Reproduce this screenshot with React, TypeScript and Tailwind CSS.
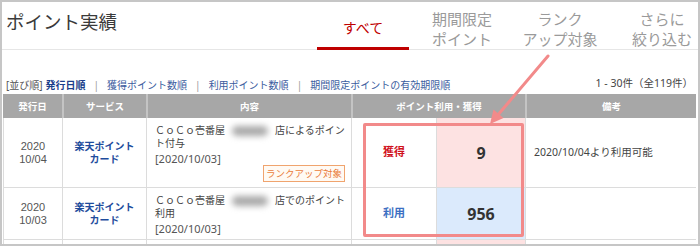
import React from "react";

const cell = "border-r border-[#dcdcdc]";

function Blob() {
  return (
    <span className="inline-block align-middle w-[36px] h-[10px] mx-[7px] bg-[#a9a9a9] blur-[3px] rounded-full" />
  );
}

export default function App() {
  return (
    <div className="relative w-[700px] h-[246px] border-2 border-[#c6c6c6] overflow-hidden bg-white font-['Noto_Sans','Noto_Sans_CJK_JP',sans-serif] text-[#444]">
      {/* Top header */}
      <div className="flex h-[48px] border-b border-[#e6e6e6]">
        <div className="pl-[4px] pt-[8px] text-[18.5px] leading-[22px] text-[#3a3a3a] font-['Noto_Sans_CJK_JP',sans-serif]">
          ポイント実績
        </div>
        <div className="ml-auto flex h-full font-['Noto_Sans_CJK_JP',sans-serif] text-[15px] leading-[20px]">
          <div className="w-[92px] h-[48px] flex justify-center pt-[15px] border-b-[3px] border-[#bf0000] text-[#bf0000] text-[14px]">
            すべて
          </div>
          <div className="w-[92px] ml-[7px] h-full flex flex-col items-center pt-[7px] text-[#9a9a9a]">
            <span>期間限定</span>
            <span>ポイント</span>
          </div>
          <div className="w-[92px] ml-[6px] h-full flex flex-col items-center pt-[7px] text-[#9a9a9a]">
            <span>ランク</span>
            <span>アップ対象</span>
          </div>
          <div className="w-[72px] ml-[20px] h-full flex flex-col items-center pt-[7px] text-[#9a9a9a]">
            <span>さらに</span>
            <span>絞り込む</span>
          </div>
        </div>
      </div>

      {/* Sort row */}
      <div className="flex h-[44px] pt-[26px] pl-[4px] pr-[5px] text-[10px] leading-[14px]">
        <div className="flex items-center whitespace-nowrap">
          <span className="text-[#555]">[並び順]</span>
          <span className="ml-[3px] font-bold text-[#1b3f8b]">発行日順</span>
          <span className="mx-[8px] text-[#999]">|</span>
          <span className="text-[#3b5c9e]">獲得ポイント数順</span>
          <span className="mx-[8px] text-[#999]">|</span>
          <span className="text-[#3b5c9e]">利用ポイント数順</span>
          <span className="mx-[8px] text-[#999]">|</span>
          <span className="text-[#3b5c9e]">期間限定ポイントの有効期限順</span>
        </div>
        <div className="ml-auto text-[#444] whitespace-nowrap text-[10.5px]">1 - 30件（全119件）</div>
      </div>

      {/* Table */}
      <div className="ml-[1px] w-[693px]">
        <div className="grid grid-cols-[59px_84px_205px_174px_171px] h-[24px] bg-[#a7a7a7] text-white font-bold text-[9.5px] font-['Noto_Sans_CJK_JP',sans-serif]">
          <div className="flex items-center justify-center">発行日</div>
          <div className="flex items-center justify-center border-l-2 border-[#c4c4c4]">サービス</div>
          <div className="flex items-center justify-center border-l-2 border-[#c4c4c4]">内容</div>
          <div className="flex items-center justify-center border-l-2 border-[#c4c4c4]">ポイント利用・獲得</div>
          <div className="flex items-center justify-center border-l-2 border-[#c4c4c4]">備考</div>
        </div>

        {/* Row 1 */}
        <div className="grid grid-cols-[59px_84px_205px_85px_89px_171px] h-[70px] border-b border-l border-[#dcdcdc]">
          <div className={`${cell} flex items-center justify-center text-center text-[11px] leading-[13px] text-[#555] font-['Liberation_Sans',sans-serif]`}>
            <p>2020<br />10/04</p>
          </div>
          <div className={`${cell} flex items-center justify-center text-center text-[10px] leading-[12.5px] font-bold text-[#1e4c9c]`}>
            <p>楽天ポイント<br />カード</p>
          </div>
          <div className={`${cell} flex flex-col pl-[8px] pr-[6px] pt-[6px]`}>
            <p className="text-[10px] leading-[13px] whitespace-nowrap">
              ＣｏＣｏ壱番屋<Blob />店によるポイン<br />ト付与
            </p>
            <div className="text-[11px] leading-[13px] mt-[2px] text-[#555]">[2020/10/03]</div>
            <div className="flex justify-end">
              <span className="border border-[#f0a46e] bg-[#fffaf4] text-[#ea7d3c] text-[9.5px] leading-[15px] px-[2px]">
                ランクアップ対象
              </span>
            </div>
          </div>
          <div className={`${cell} flex items-center justify-center text-[11px] font-bold text-[#d0101b]`}>獲得</div>
          <div className={`${cell} flex items-center justify-center bg-[#fde2e2] text-[16px] font-bold text-[#333]`}>9</div>
          <div className="flex items-center pl-[8px] text-[10.5px] text-[#444]">2020/10/04より利用可能</div>
        </div>

        {/* Row 2 */}
        <div className="grid grid-cols-[59px_84px_205px_85px_89px_171px] h-[52px] border-b border-l border-[#dcdcdc]">
          <div className={`${cell} flex items-center justify-center text-center text-[11px] leading-[13px] text-[#555] font-['Liberation_Sans',sans-serif]`}>
            <p>2020<br />10/03</p>
          </div>
          <div className={`${cell} flex items-center justify-center text-center text-[10px] leading-[12.5px] font-bold text-[#1e4c9c]`}>
            <p>楽天ポイント<br />カード</p>
          </div>
          <div className={`${cell} flex flex-col pl-[8px] pr-[6px] pt-[6px]`}>
            <p className="text-[10px] leading-[13px] whitespace-nowrap">
              ＣｏＣｏ壱番屋<Blob />店でのポイント<br />利用
            </p>
            <div className="text-[11px] leading-[13px] mt-[2px] text-[#555]">[2020/10/03]</div>
          </div>
          <div className={`${cell} flex items-center justify-center text-[11px] font-bold text-[#3b6fc2]`}>利用</div>
          <div className={`${cell} flex items-center justify-center bg-[#dbeafc] text-[16px] font-bold text-[#333]`}>956</div>
          <div />
        </div>

        {/* Row 3 (cut off) */}
        <div className="grid grid-cols-[59px_84px_205px_85px_89px_171px] h-[20px] border-l border-[#dcdcdc]">
          <div className={cell} />
          <div className={cell} />
          <div className={cell} />
          <div className={cell} />
          <div className={`${cell} bg-[#fde2e2]`} />
          <div />
        </div>
      </div>

      {/* Annotation box */}
      <div className="absolute left-[361px] top-[121px] w-[161px] h-[114px] border-[3px] border-[#f28a8a] rounded-[2px] pointer-events-none" />

      {/* Annotation arrow */}
      <svg
        className="absolute left-[-2px] top-[-2px] pointer-events-none"
        width="700"
        height="246"
        viewBox="0 0 700 246"
      >
        <line x1="548" y1="56" x2="497" y2="116" stroke="#f28a8a" strokeWidth="3" strokeLinecap="round" />
        <polygon points="490,124 493.5,109.5 503.5,118" fill="#f28a8a" />
      </svg>
    </div>
  );
}
